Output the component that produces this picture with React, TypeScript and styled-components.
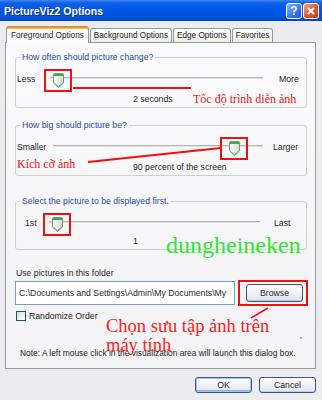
import styled, { createGlobalStyle, css } from "styled-components"

const Global = createGlobalStyle`
  html, body { margin: 0; padding: 0; background: #fff; }
`

const Window = styled.div`
  position: relative;
  width: 322px;
  height: 400px;
  overflow: hidden;
  background: #ecebef;
  display: flex;
  flex-direction: column;
  font-family: "Liberation Sans", Arial, sans-serif;
  font-size: 8.7px;
  color: #1e1e1e;
`

const TitleBar = styled.div`
  height: 21px;
  flex: none;
  box-sizing: border-box;
  display: flex;
  align-items: center;
  justify-content: space-between;
  padding: 0 3px 0 4px;
  background: linear-gradient(#3d87f5 0%, #105fe6 14%, #0058e6 45%, #0053dd 80%, #0044bd 100%);
`

const Title = styled.div`
  color: #fff;
  font-weight: bold;
  font-size: 10.5px;
  text-shadow: 1px 1px 0 #0a2f8a;
`

const Caption = styled.div`
  display: flex;
  gap: 1px;
`

const CapButton = styled.div<{ $close?: boolean }>`
  width: 16px;
  height: 16px;
  box-sizing: border-box;
  border: 1px solid #fff;
  border-radius: 3px;
  display: flex;
  align-items: center;
  justify-content: center;
  color: #fff;
  font-weight: bold;
  font-size: 12px;
  background: ${p =>
    p.$close
      ? "linear-gradient(135deg, #f3a88c, #e0552c 55%, #c33b12)"
      : "linear-gradient(135deg, #8ab6fb, #3a78ee 55%, #2159d8)"};
`

const Body = styled.div`
  flex: 1;
  display: flex;
  flex-direction: column;
  padding: 5px 6px 0 5px;
`

const TabStrip = styled.div`
  display: flex;
  align-items: flex-end;
  gap: 1px;
  height: 17px;
  padding-left: 1px;
  margin-bottom: -1px;
  position: relative;
  z-index: 1;
  font-size: 8.2px;
`

const Tab = styled.div<{ $active?: boolean }>`
  box-sizing: border-box;
  display: flex;
  align-items: center;
  padding: 0 3px;
  white-space: nowrap;
  border: 1px solid #919b9c;
  border-bottom: none;
  border-radius: 3px 3px 0 0;
  ${p =>
    p.$active
      ? css`
          height: 17px;
          padding: 0 4px;
          background: #fbfbfd;
          border-top: 2px solid #e68b2c;
          box-shadow: inset 0 1px 0 #ffc73c;
        `
      : css`
          height: 14px;
          margin-bottom: 1px;
          background: linear-gradient(#ffffff, #ecebe6);
        `}
`

const Panel = styled.div`
  height: 327px;
  box-sizing: border-box;
  border: 1px solid #919b9c;
  background: linear-gradient(#fafafc, #f3f3f6);
  padding: 0 8px 10px 9px;
  display: flex;
  flex-direction: column;
`

const Group = styled.fieldset<{ $mt: number }>`
  margin: ${p => p.$mt}px 0 0;
  padding: 8px 1px 3px 1px;
  border: 1px solid #d0d0c8;
  border-radius: 3px;
  min-width: 0;
`

const Legend = styled.legend`
  color: #2c4c9c;
  padding: 0 2px;
  margin-left: 3px;
  line-height: 10px;
`

const SliderRow = styled.div<{ $cols: string }>`
  display: grid;
  grid-template-columns: ${p => p.$cols};
  align-items: center;
  height: 18px;
`

const SideLabel = styled.span<{ $pad: number }>`
  padding-left: ${p => p.$pad}px;
  white-space: nowrap;
`

const Track = styled.div`
  position: relative;
  height: 18px;
`

const Channel = styled.div`
  position: absolute;
  left: 0;
  right: 0;
  top: 7px;
  height: 3px;
  box-sizing: border-box;
  background: #e2e2e2;
  border-top: 1px solid #b4b4b4;
  border-bottom: 1px solid #fff;
`

const Thumb = styled.div<{ $marked?: boolean }>`
  position: absolute;
  top: 3px;
  width: 11px;
  height: 15px;
  ${p =>
    p.$marked &&
    css`
      &::after {
        content: "";
        position: absolute;
        left: -9px;
        right: -8px;
        top: -4px;
        bottom: -4px;
        border: 2px solid #f01010;
      }
    `}
`

const Value = styled.div<{ $mt: number }>`
  margin-top: ${p => p.$mt}px;
  padding-left: 116px;
  line-height: 10px;
`

const FieldLabel = styled.div`
  margin-top: 18px;
  padding-left: 1px;
  line-height: 10px;
`

const FolderRow = styled.div`
  display: flex;
  align-items: center;
  margin-top: 3px;
`

const PathBox = styled.div`
  width: 220px;
  height: 24px;
  box-sizing: border-box;
  border: 1px solid #7f9db9;
  background: #fff;
  display: flex;
  align-items: center;
  padding-left: 3px;
  white-space: nowrap;
  overflow: hidden;
`

const Marked = styled.div`
  position: relative;
  margin-left: 11px;
  display: flex;
  &::after {
    content: "";
    position: absolute;
    left: -8px;
    right: -5px;
    top: -4px;
    bottom: -4px;
    border: 2px solid #f01010;
  }
`

const Button = styled.button<{ $w: number; $h: number; $default?: boolean }>`
  width: ${p => p.$w}px;
  height: ${p => p.$h}px;
  box-sizing: border-box;
  padding: 0;
  border: 1px solid #37558a;
  border-radius: 3px;
  font: inherit;
  color: #1e1e1e;
  background: linear-gradient(#ffffff, #f4f4f6 45%, #dde3ee);
  box-shadow: ${p =>
    p.$default ? "inset 0 0 0 1px #a9c3ee, inset 0 -2px 0 #8fb0e6" : "inset 0 -1px 0 #c3cde0"};
`

const CheckRow = styled.div`
  display: flex;
  align-items: center;
  gap: 3px;
  margin-top: 6px;
  padding-left: 1px;
`

const Box = styled.span`
  width: 10px;
  height: 10px;
  box-sizing: border-box;
  border: 1px solid #1c5180;
  background: linear-gradient(135deg, #dcdcd6, #ffffff);
`

const Note = styled.div`
  margin-top: auto;
  padding-left: 5px;
  line-height: 10px;
  font-size: 8.4px;
  white-space: nowrap;
`

const Footer = styled.div`
  display: flex;
  justify-content: flex-end;
  gap: 7px;
  padding: 8px 0 0 0;
`

const Overlay = styled.div`
  position: absolute;
  inset: 0;
  pointer-events: none;
`

const Scribble = styled.div<{ $x: number; $y: number; $size: number; $color: string }>`
  position: absolute;
  left: ${p => p.$x}px;
  top: ${p => p.$y}px;
  font-family: "Liberation Serif", "Times New Roman", serif;
  font-size: ${p => p.$size}px;
  line-height: ${p => p.$size}px;
  color: ${p => p.$color};
  white-space: nowrap;
`

const Lines = styled.svg`
  position: absolute;
  left: 0;
  top: 0;
`

function ThumbShape() {
  return (
    <svg width="11" height="15" viewBox="0 0 11 15">
      <defs>
        <linearGradient id="tg" x1="0" y1="0" x2="1" y2="0">
          <stop offset="0" stopColor="#ffffff" />
          <stop offset="1" stopColor="#d6d6d0" />
        </linearGradient>
      </defs>
      <path
        d="M0.5 1.5 Q0.5 0.5 1.5 0.5 H9.5 Q10.5 0.5 10.5 1.5 V10 L5.5 14.5 L0.5 10 Z"
        fill="url(#tg)"
        stroke="#7c8c9c"
      />
      <rect x="1" y="1" width="9" height="2" fill="#2fb82f" />
      <polyline points="1.5,10.3 5.5,13.7 9.5,10.3" fill="none" stroke="#44c444" />
    </svg>
  )
}

type SliderProps = {
  left: string
  right: string
  cols: string
  lpad: number
  rpad: number
  value: number
  marked?: boolean
}

function Slider({ left, right, cols, lpad, rpad, value, marked }: SliderProps) {
  return (
    <SliderRow $cols={cols}>
      <SideLabel $pad={lpad}>{left}</SideLabel>
      <Track>
        <Channel />
        <Thumb $marked={marked} style={{ left: `calc((100% - 11px) * ${value})` }}>
          <ThumbShape />
        </Thumb>
      </Track>
      <SideLabel $pad={rpad}>{right}</SideLabel>
    </SliderRow>
  )
}

export default function App() {
  return (
    <Window>
      <Global />
      <TitleBar>
        <Title>PictureViz2 Options</Title>
        <Caption>
          <CapButton>?</CapButton>
          <CapButton $close>
            <svg width="8" height="8" viewBox="0 0 8 8">
              <path d="M1 1 L7 7 M7 1 L1 7" stroke="#fff" strokeWidth="2" />
            </svg>
          </CapButton>
        </Caption>
      </TitleBar>
      <Body>
        <TabStrip>
          <Tab $active>Foreground Options</Tab>
          <Tab>Background Options</Tab>
          <Tab>Edge Options</Tab>
          <Tab>Favorites</Tab>
        </TabStrip>
        <Panel>
          <Group $mt={9}>
            <Legend>How often should picture change?</Legend>
            <Slider left="Less" right="More" cols="33px 1fr 42px" lpad={0} rpad={16} value={0.015} marked />
            <Value $mt={6}>2 seconds</Value>
          </Group>
          <Group $mt={12}>
            <Legend>How big should picture be?</Legend>
            <Slider left="Smaller" right="Larger" cols="36px 1fr 42px" lpad={0} rpad={10} value={0.884} marked />
            <Value $mt={6}>90 percent of the screen</Value>
          </Group>
          <Group $mt={20}>
            <Legend>Select the picture to be displayed first.</Legend>
            <Slider left="1st" right="Last" cols="32px 1fr 45px" lpad={8} rpad={14} value={0.015} marked />
            <Value $mt={4}>1</Value>
          </Group>
          <FieldLabel>Use pictures in this folder</FieldLabel>
          <FolderRow>
            <PathBox>C:\Documents and Settings\Admin\My Documents\My</PathBox>
            <Marked>
              <Button $w={57} $h={18}>Browse</Button>
            </Marked>
          </FolderRow>
          <CheckRow>
            <Box />
            <span>Randomize Order</span>
          </CheckRow>
          <Note>Note: A left mouse click in the visualization area will launch this dialog box.</Note>
        </Panel>
        <Footer>
          <Button $w={57} $h={16} $default>OK</Button>
          <Button $w={57} $h={16}>Cancel</Button>
        </Footer>
      </Body>
      <Overlay>
        <Lines width="322" height="400">
          <line x1="73" y1="88" x2="191" y2="88" stroke="#f01010" strokeWidth="2" />
          <line x1="88" y1="162" x2="221" y2="148" stroke="#f01010" strokeWidth="2" />
          <line x1="251" y1="318" x2="268" y2="308" stroke="#f01010" strokeWidth="1.5" />
          <circle cx="301" cy="338" r="0.8" fill="#f01010" />
        </Lines>
        <Scribble $x={193} $y={93} $size={12} $color="#f01010">Tốc độ trình diễn ảnh</Scribble>
        <Scribble $x={17} $y={158} $size={12} $color="#f01010">Kích cỡ ảnh</Scribble>
        <Scribble $x={166} $y={233} $size={24} $color="#2ee82e">dungheineken</Scribble>
        <Scribble $x={106} $y={317} $size={18.5} $color="#ff1a1a">
          Chọn sưu tập ảnh trên
          <br />
          máy tính
        </Scribble>
      </Overlay>
    </Window>
  )
}
